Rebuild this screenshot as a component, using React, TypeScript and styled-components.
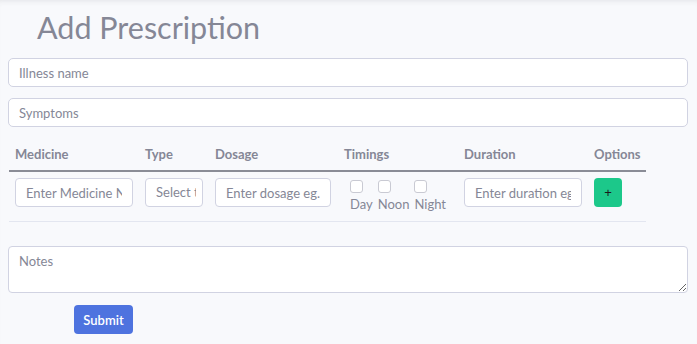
import styled, { createGlobalStyle } from "styled-components";

const GlobalStyle = createGlobalStyle`
	html, body {
		margin: 0;
		padding: 0;
		background: #f8f9fc;
	}
	body {
		font-family: "Lato", "Noto Sans", sans-serif;
		color: #858796;
	}
	* {
		box-sizing: border-box;
	}
`;

const Page = styled.div`
	width: 697px;
	height: 344px;
	padding: 10px 9px 0 8px;
	box-shadow: inset 0 5px 6px -5px rgba(58, 59, 69, 0.15);
	overflow: hidden;
`;

const Title = styled.h1`
	margin: 0 0 14px 29px;
	font-size: 30.5px;
	font-weight: 400;
	line-height: 34px;
	color: #858796;
`;

const Field = styled.input`
	display: block;
	width: 100%;
	height: 29px;
	padding: 0 10px;
	margin-bottom: 11px;
	border: 1px solid #d1d3e2;
	border-radius: 5px;
	background: #fff;
	font-family: inherit;
	font-size: 13px;
	color: #6e707e;
	&::placeholder {
		color: #858796;
	}
`;

const Grid = styled.div`
	display: grid;
	grid-template-columns: 130px 70px 129px 120px 130px 58px;
	width: 638px;
	margin: 19px 0 0 1px;
`;

const HeadCell = styled.div`
	padding: 0 6px 8px;
	font-size: 13px;
	font-weight: 700;
	line-height: 16px;
	color: #858796;
	border-bottom: 2px solid #8a8c96;
`;

const Cell = styled.div`
	height: 50px;
	padding: 6px 6px 0;
	border-bottom: 1px solid #e3e6f0;
`;

const CellInput = styled.input<{ $w: number }>`
	width: ${(p) => p.$w}px;
	height: 29px;
	padding: 0 10px;
	border: 1px solid #d1d3e2;
	border-radius: 4px;
	background: #fff;
	font-family: inherit;
	font-size: 13px;
	color: #6e707e;
	&::placeholder {
		color: #858796;
	}
`;

const SelectBox = styled.div`
	width: 58px;
	height: 29px;
	padding: 0 10px;
	border: 1px solid #d1d3e2;
	border-radius: 4px;
	background: #fff;
	font-size: 13px;
	line-height: 27px;
	color: #858796;
`;

const SelectText = styled.span`
	display: block;
	width: 40px;
	overflow: hidden;
	white-space: nowrap;
`;

const Timings = styled.div`
	display: flex;
	gap: 5px;
	padding: 2px 0 0 6px;
`;

const TimeOption = styled.label`
	display: flex;
	flex-direction: column;
	align-items: flex-start;
	font-size: 13px;
	line-height: 16px;
	color: #858796;
`;

const Check = styled.span`
	width: 13px;
	height: 13px;
	margin-bottom: 3px;
	border: 1px solid #c9cad3;
	border-radius: 3px;
	background: #fff;
`;

const AddButton = styled.button`
	width: 28px;
	height: 29px;
	padding: 0;
	border: none;
	border-radius: 4px;
	background: #1cc88a;
	color: #1a1a1a;
	font-size: 13px;
	line-height: 29px;
`;

const Notes = styled.textarea`
	display: block;
	width: 100%;
	height: 47px;
	margin-top: 24px;
	padding: 6px 10px;
	border: 1px solid #d1d3e2;
	border-radius: 4px;
	background: #fff;
	font-family: inherit;
	font-size: 13px;
	resize: vertical;
	&::placeholder {
		color: #858796;
	}
`;

const SubmitButton = styled.button`
	display: block;
	margin: 12px 0 0 66px;
	width: 59px;
	height: 29px;
	border: none;
	border-radius: 4px;
	background: #4e73df;
	color: #fff;
	font-family: inherit;
	font-size: 13px;
	font-weight: 600;
`;

const headers = ["Medicine", "Type", "Dosage", "Timings", "Duration", "Options"];
const timings = ["Day", "Noon", "Night"];

export default function App() {
	return (
		<>
			<GlobalStyle />
			<Page>
				<Title>Add Prescription</Title>
				<Field placeholder="Illness name" />
				<Field placeholder="Symptoms" />
				<Grid>
					{headers.map((h) => (
						<HeadCell key={h}>{h}</HeadCell>
					))}
					<Cell>
						<CellInput $w={118} placeholder="Enter Medicine Name" />
					</Cell>
					<Cell>
						<SelectBox>
							<SelectText>Select type</SelectText>
						</SelectBox>
					</Cell>
					<Cell>
						<CellInput $w={116} placeholder="Enter dosage eg." />
					</Cell>
					<Cell>
						<Timings>
							{timings.map((t) => (
								<TimeOption key={t}>
									<Check />
									{t}
								</TimeOption>
							))}
						</Timings>
					</Cell>
					<Cell>
						<CellInput $w={118} placeholder="Enter duration eg." />
					</Cell>
					<Cell>
						<AddButton>+</AddButton>
					</Cell>
				</Grid>
				<Notes placeholder="Notes" />
				<SubmitButton>Submit</SubmitButton>
			</Page>
		</>
	);
}
